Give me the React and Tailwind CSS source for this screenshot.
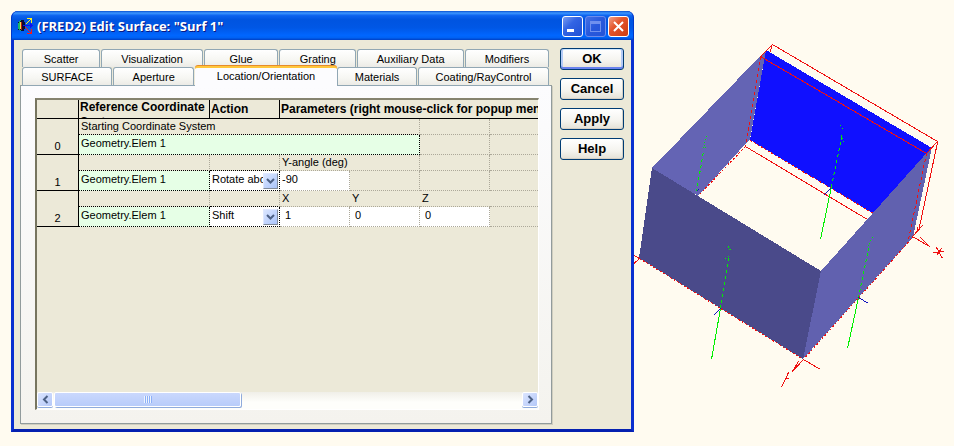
import React from "react";

const CHROME = "font-['Liberation_Sans',Arial,sans-serif] text-[11px] leading-[14px] text-black";

function AppIcon() {
  return (
    <svg width="16" height="16" viewBox="0 0 16 16" shapeRendering="crispEdges" aria-hidden="true">
      <path d="M3 2h4v2h1v7H7v2H3v-1H1V4h2z" fill="#0a0c30" />
      <path d="M2 3h1v9H2zM1 5h1v6H1zM3 2h1v1H3zM3 12h1v1H3z" fill="#18b868" />
      <path d="M3 4h1v7H3z" fill="#f0e050" />
      <path d="M4 4h1v8H4z" fill="#b01818" />
      <path d="M9 5h1v1H9zM10 4h1v1h-1zM11 3h1v1h-1zM12 2h1v1h-1zM10 0h5v5h-1V2h-1V1h-3z" fill="#fff020" />
      <path d="M6 7h10v1H6zM13 5h1v5h-1zM14 6h1v3h-1z" fill="#1010f0" />
      <path d="M8 9h1v1H8zM9 10h1v1H9zM10 11h1v1h-1zM11 12h1v1h-1zM12 13h1v1h-1zM14 11h1v5h-5v-1h3v-1h1z" fill="#f81818" />
    </svg>
  );
}

function CaptionButton({ label, tone, children }) {
  return (
    <button
      type="button"
      aria-label={label}
      className={`flex h-[21px] w-[21px] items-center justify-center rounded-[3px] border ${tone}`}
    >
      <svg width="19" height="19" viewBox="0 0 19 19" shapeRendering="crispEdges" aria-hidden="true">
        {children}
      </svg>
    </button>
  );
}

function TitleBar() {
  return (
    <header className="flex h-[29px] items-center justify-between rounded-t-[7px] border-x border-[#0038c8] bg-[linear-gradient(180deg,#0a50d0_0%,#3c96ff_7%,#0c62ee_16%,#0054e0_30%,#0057e5_58%,#0066ff_84%,#0062f4_92%,#0040c4_100%)] pr-[4px] pl-[5px]">
      <div className="flex items-center gap-[4px]">
        <AppIcon />
        <h1 className="pt-px font-['Open_Sans','Noto_Sans',sans-serif] text-[13px] leading-[18px] font-bold whitespace-nowrap text-white [text-shadow:1px_1px_#0a1883]">
          (FRED2) Edit Surface: "Surf 1"
        </h1>
      </div>
      <div className="flex gap-[2px] pt-[2px]">
        <CaptionButton label="Minimize" tone="border-white bg-[linear-gradient(135deg,#7a9cf0,#3264e4_40%,#2050d4)]">
          <rect x="4" y="12" width="7" height="3" fill="#fff" />
        </CaptionButton>
        <CaptionButton label="Maximize" tone="border-[#6c8cec] bg-[linear-gradient(135deg,#4470e4,#2858dc_50%,#2454d8)]">
          <path d="M4 4h11v11H4zM5 7v7h9V7z" fillRule="evenodd" fill="#6f90ee" />
        </CaptionButton>
        <CaptionButton label="Close" tone="border-white bg-[linear-gradient(135deg,#f0a088,#e4552c_40%,#cc3c10)]">
          <path d="M5 5 14 14M14 5 5 14" stroke="#fff" strokeWidth="2" shapeRendering="auto" />
        </CaptionButton>
      </div>
    </header>
  );
}

function Tab({ label, width }) {
  return (
    <button
      type="button"
      role="tab"
      aria-selected="false"
      className={`mr-px h-[18px] rounded-t-[3px] border border-b-0 border-[#91a7b4] bg-[linear-gradient(180deg,#ffffff,#f6f6f2_60%,#ecebe6)] whitespace-nowrap ${width}`}
    >
      {label}
    </button>
  );
}

function Tabs() {
  return (
    <div role="tablist" aria-label="Surface properties" className="relative z-10 -mb-px pr-[2px] pl-[2px]">
      <div className="flex">
        <Tab label="Scatter" width="flex-[78]" />
        <Tab label="Visualization" width="flex-[102]" />
        <Tab label="Glue" width="flex-[74]" />
        <Tab label="Grating" width="flex-[77]" />
        <Tab label="Auxiliary Data" width="flex-[107]" />
        <Tab label="Modifiers" width="flex-[84]" />
      </div>
      <div className="flex items-end">
        <div className="flex flex-[173] border-b border-[#91a7b4]">
          <Tab label="SURFACE" width="flex-[91]" />
          <Tab label="Aperture" width="flex-[81]" />
        </div>
        <button
          type="button"
          role="tab"
          aria-selected="true"
          className="-mt-px h-[20px] flex-[142] rounded-t-[3px] border-t-2 border-[#ffc73c] bg-[#fcfcfe] pb-[2px] whitespace-nowrap shadow-[0_-1px_#e68b2c]"
        >
          Location/Orientation
        </button>
        <div className="flex flex-[213] border-b border-[#91a7b4]">
          <Tab label="Materials" width="flex-[80]" />
          <Tab label="Coating/RayControl" width="flex-[132]" />
        </div>
      </div>
    </div>
  );
}

const FAINT_R = "border-r border-r-[#aca899] [border-right-style:dotted]";
const FAINT_B = "border-b border-b-[#aca899] [border-bottom-style:dotted]";
const DARK_R = "border-r border-r-black [border-right-style:dotted]";
const DARK_B = "border-b border-b-black [border-bottom-style:dotted]";

function Blank({ className = `${FAINT_R} ${FAINT_B}` }) {
  return <td className={`p-0 ${className}`} />;
}

function LabelCell({ colSpan, className, children }) {
  return (
    <td colSpan={colSpan} className={`p-0 pl-[2px] align-top ${className}`}>
      <div className="h-[15px] leading-[14px]">{children}</div>
    </td>
  );
}

function FieldCell({ label, value, className, inputClass = "pl-[2px]", colSpan }) {
  return (
    <td colSpan={colSpan} className={`p-0 align-top ${className}`}>
      <input
        aria-label={label}
        defaultValue={value}
        className={`block h-[16px] w-full bg-transparent outline-none ${inputClass}`}
      />
    </td>
  );
}

function ActionCell({ label, value, options }) {
  return (
    <td className={`bg-white p-0 align-top ${DARK_R} ${DARK_B}`}>
      <div className="relative h-[18px]">
        <select
          aria-label={label}
          defaultValue={value}
          className="block h-[16px] w-full appearance-none bg-transparent pr-[16px] pl-[2px] outline-none"
        >
          {options.map((o) => (
            <option key={o}>{o}</option>
          ))}
        </select>
        <span className="pointer-events-none absolute top-[2px] right-px flex h-[16px] w-[15px] items-center justify-center border border-[#dfe8ff] border-r-[#808a98] border-b-[#808a98] bg-[linear-gradient(135deg,#dbe6ff,#aac4fa)]">
          <svg width="9" height="6" viewBox="0 0 9 6" aria-hidden="true">
            <path d="M1 1 4.500 4.500 8 1" fill="none" stroke="#4d6185" strokeWidth="2" />
          </svg>
        </span>
      </div>
    </td>
  );
}

function RowHeader({ children }) {
  return (
    <th rowSpan={2} scope="rowgroup" className="border-r border-b border-black p-0 pb-px text-center align-bottom font-normal">
      {children}
    </th>
  );
}

const GREEN = "bg-[#e6ffe6]";
const HEAD = "overflow-hidden border-b border-black p-0 pl-px text-left text-[12px] font-bold whitespace-nowrap";

function TransformTable() {
  return (
    <table className="w-full table-fixed border-separate border-spacing-0">
      <colgroup>
        <col className="w-[42px]" />
        <col className="w-[131px]" />
        <col className="w-[70px]" />
        <col className="w-[70px]" />
        <col className="w-[70px]" />
        <col className="w-[70px]" />
        <col />
      </colgroup>
      <thead>
        <tr className="h-[19px]">
          <td className="border-r border-b border-black p-0" />
          <th scope="col" className={`border-r align-top ${HEAD}`}>
            <div className="h-[18px] overflow-hidden leading-[15px] whitespace-normal">Reference Coordinate System</div>
          </th>
          <th scope="col" className={`border-r ${HEAD}`}>Action</th>
          <th scope="col" colSpan={4} className={HEAD}>Parameters (right mouse-click for popup menu)</th>
        </tr>
      </thead>
      <tbody>
        <tr className="h-[16px]">
          <RowHeader>0</RowHeader>
          <LabelCell colSpan={4} className={`${FAINT_R} ${DARK_B}`}>Starting Coordinate System</LabelCell>
          <Blank />
          <Blank className={FAINT_B} />
        </tr>
        <tr className="h-[20px]">
          <FieldCell colSpan={4} label="Starting system" value="Geometry.Elem 1" className={`${GREEN} ${DARK_R} ${DARK_B}`} />
          <Blank />
          <Blank className={FAINT_B} />
        </tr>
      </tbody>
      <tbody>
        <tr className="h-[16px]">
          <RowHeader>1</RowHeader>
          <Blank className={`${FAINT_R} ${DARK_B}`} />
          <Blank className={`${FAINT_R} ${DARK_B}`} />
          <LabelCell colSpan={2} className={`${FAINT_R} ${FAINT_B}`}>Y-angle (deg)</LabelCell>
          <Blank />
          <Blank className={FAINT_B} />
        </tr>
        <tr className="h-[20px]">
          <FieldCell label="Reference system 1" value="Geometry.Elem 1" className={`${GREEN} ${DARK_R} ${DARK_B}`} />
          <ActionCell label="Action 1" value="Rotate about Y" options={["Rotate about Y", "Shift"]} />
          <FieldCell label="Y-angle (deg)" value="-90" className={`bg-white ${FAINT_R} ${FAINT_B}`} />
          <Blank />
          <Blank />
          <Blank className={FAINT_B} />
        </tr>
      </tbody>
      <tbody>
        <tr className="h-[16px]">
          <RowHeader>2</RowHeader>
          <Blank className={`${FAINT_R} ${DARK_B}`} />
          <Blank className={`${FAINT_R} ${DARK_B}`} />
          <LabelCell className={FAINT_B}>X</LabelCell>
          <LabelCell className={FAINT_B}>Y</LabelCell>
          <LabelCell className={FAINT_B}>Z</LabelCell>
          <Blank className={FAINT_B} />
        </tr>
        <tr className="h-[20px]">
          <FieldCell label="Reference system 2" value="Geometry.Elem 1" className={`${GREEN} ${DARK_R} ${DARK_B}`} />
          <ActionCell label="Action 2" value="Shift" options={["Shift", "Rotate about Y"]} />
          <FieldCell label="X shift" value="1" inputClass="pl-[5px]" className={`bg-white ${FAINT_R} ${FAINT_B}`} />
          <FieldCell label="Y shift" value="0" inputClass="pl-[5px]" className={`bg-white ${FAINT_R} ${FAINT_B}`} />
          <FieldCell label="Z shift" value="0" inputClass="pl-[5px]" className={`bg-white ${FAINT_R} ${FAINT_B}`} />
          <Blank className={FAINT_B} />
        </tr>
      </tbody>
    </table>
  );
}

function ScrollArrow({ label, d }) {
  return (
    <button
      type="button"
      aria-label={label}
      className="flex h-[15px] w-[16px] items-center justify-center rounded-[2px] border border-white bg-[linear-gradient(135deg,#dbe5ff,#b4c8f8)] shadow-[0_1px_#8fabdc]"
    >
      <svg width="7" height="9" viewBox="0 0 7 9" aria-hidden="true">
        <path d={d} fill="none" stroke="#4d6185" strokeWidth="2" />
      </svg>
    </button>
  );
}

function ScrollBar() {
  return (
    <div className="flex h-[17px] items-start bg-[linear-gradient(180deg,#f0efe8,#fefefb_60%,#fefefb)]">
      <ScrollArrow label="Scroll left" d="M5.500 1 2 4.500 5.500 8" />
      <div className="flex-1 pl-px">
        <div className="flex h-[15px] w-[40%] items-center justify-center gap-px rounded-[2px] border border-white bg-[linear-gradient(180deg,#cad8fd,#b8ccfa)] shadow-[1px_1px_#8fabdc]">
          {[0, 1, 2, 3].map((i) => (
            <span key={i} className="h-[7px] w-px bg-[#eef4fe] shadow-[1px_0_#8cb0f8]" />
          ))}
        </div>
      </div>
      <ScrollArrow label="Scroll right" d="M1.500 1 5 4.500 1.500 8" />
    </div>
  );
}

function DialogButton({ label, primary }) {
  return (
    <button
      type="button"
      className={`h-[22px] rounded-[3px] border border-[#003c74] bg-[linear-gradient(180deg,#ffffff,#f4f3ee_60%,#e4e1d6)] text-[13px] leading-[18px] font-bold ${
        primary ? "shadow-[inset_0_-2px_#6982ee,inset_2px_0_#b4cbf6,inset_-2px_0_#b4cbf6,inset_0_1px_#cee7ff]" : "shadow-[inset_-1px_-1px_#d6d0c5]"
      }`}
    >
      {label}
    </button>
  );
}

function Dialog() {
  return (
    <section aria-label="Edit Surface" className={`min-w-0 flex-1 rounded-t-[7px] bg-[#0831d9] ${CHROME}`}>
      <TitleBar />
      <div className="border-x-[3px] border-b-[3px] border-x-[#0a30d0] border-b-[#0520b0]">
        <div className="flex gap-[8px] bg-[#ece9d8] pt-[9px] pr-[7px] pb-[5px] pl-[6px]">
          <div className="min-w-0 flex-1">
            <Tabs />
            <div className="border border-[#919b9c] bg-[linear-gradient(180deg,#fcfcfe,#f4f3ee)] pt-[12px] pr-[12px] pb-[13px] pl-[14px] shadow-[1px_1px_#d0cebf]">
              <div className="overflow-hidden border-2 border-t-[#85836f] border-r border-b border-r-white border-b-white border-l-[#77755f] bg-[#ece9d8]">
                <TransformTable />
                <div className="h-[165px]" />
                <ScrollBar />
              </div>
            </div>
          </div>
          <div className="-mt-px flex w-[64px] flex-col gap-[8px]">
            <DialogButton label="OK" primary />
            <DialogButton label="Cancel" />
            <DialogButton label="Apply" />
            <DialogButton label="Help" />
          </div>
        </div>
      </div>
    </section>
  );
}

function ModelView() {
  return (
    <svg
      width="320"
      height="446"
      viewBox="634 0 320 446"
      className="shrink-0"
      shapeRendering="crispEdges"
      role="img"
      aria-label="Four-sided mirror box with coordinate axes"
    >
      <path d="M766 50 932 148 874 214 750 140Z" fill="#1010ff" />
      <path d="M652 168 766 50 750 139 698 196Z" fill="#6464b4" />
      <path d="M821 271 932 147 913 237 803 359Z" fill="#6161af" />
      <path d="M652 168 821 271 803 359 639 258Z" fill="#4a4a8a" />
      <g fill="none" stroke="#f01010">
        <path d="M760.500 56.500 772.500 44.500 937.500 141.500 926.500 153.500ZM770.500 52.500 771.500 45.500M745.500 146.500 867.500 219.500M937.500 142.500 918.500 231.500M922.500 225.500 912.500 236.500 929.500 246.500 920.500 237.500M918.500 231.500 917.500 227.500" />
        <path d="M933.500 252.500 944.500 251.500M936.500 247.500 942.500 258.500M941.500 248.500 936.500 255.500" />
        <path d="M803.500 359.500 820.500 369.500M803.500 359.500 792.500 371.500 798.500 361.500M788.500 372.500 781.500 387.500M784.500 378.500 788.500 378.500M634 255.500 639.500 258.500 634 263.500" />
        <path d="M760.500 56.500 745.500 146.500M926.500 153.500 908.500 239.500" strokeDasharray="3 3" />
        <path d="M745.500 146.500 698.500 195.500M639.500 258.500 803.500 359.500 912.500 237.500M750.500 140.500 873.500 213.500" strokeDasharray="2 2" />
      </g>
      <g fill="none" stroke="#00f000">
        <path d="M820.500 239.500 831.500 186.500M711.500 359.500 720.500 308.500M847.500 348.500 858.500 297.500" />
        <path
          d="M696.500 191.500 703.500 151.500M831.500 186.500 841.500 137.500M720.500 308.500 728.500 258.500M858.500 297.500 868.500 248.500"
          strokeDasharray="3 3"
        />
        <path
          d="M703.500 148.500 706.500 135.500M705.500 147.500 705.500 144.500M841.500 135.500 843.500 142.500M840.500 125.500 843.500 129.500M728.500 246.500 730.500 250.500 732.500 249.500M725.500 258.500 729.500 255.500M868.500 246.500 872.500 236.500"
          strokeDasharray="1 2"
        />
      </g>
      <path
        d="M830.500 188.500 823.500 195.500M720.500 308.500 713.500 315.500M858.500 297.500 868.500 303.500M696.500 191.500 698.500 189.500"
        fill="none"
        stroke="#1010c0"
      />
    </svg>
  );
}

export default function App() {
  return (
    <main className="flex min-h-screen items-start overflow-hidden bg-[#fffbf0]">
      <div className="flex min-w-0 flex-1 pt-[11px] pl-[11px]">
        <Dialog />
      </div>
      <ModelView />
    </main>
  );
}
